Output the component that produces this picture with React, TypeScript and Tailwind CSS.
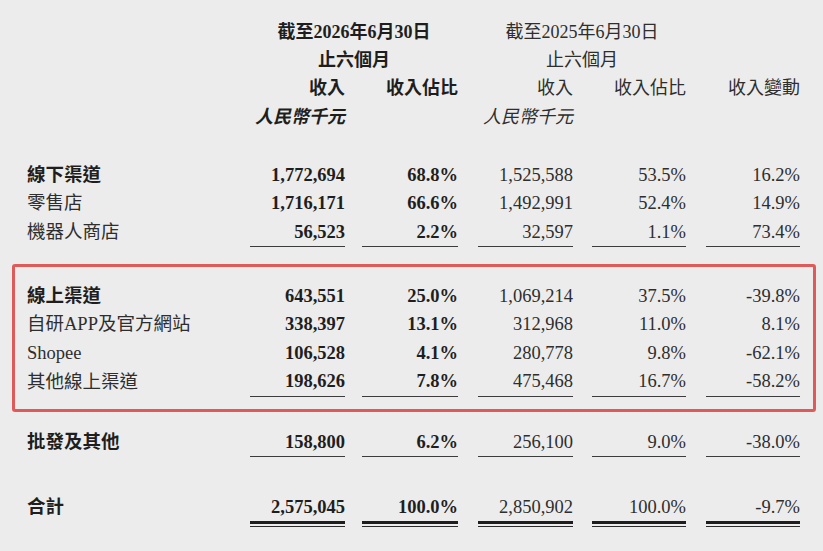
import React from "react";

const FONT = "font-['Liberation_Serif','Noto_Sans_CJK_TC',serif]";
const PADS = ["", "pl-[17px]", "pl-[20px]", "pl-[19px]", "pl-[20px]"];

type Line = "none" | "single" | "double";

function Row({
  label,
  values,
  boldLabel = false,
  line = "none",
  h = "h-[28px]",
}: {
  label: string;
  values: string[];
  boldLabel?: boolean;
  line?: Line;
  h?: string;
}) {
  return (
    <div className="grid grid-cols-[223px_95px_113px_115px_113px_114px]">
      <div
        className={`${h} flex items-center ${line === "double" ? "pb-[3px]" : ""} ${
          boldLabel ? "font-bold text-[#1e1e1e]" : "text-[#2e2e2e]"
        }`}
      >
        {label}
      </div>
      {values.map((v, i) => (
        <div key={i} className={PADS[i]}>
          <div
            className={`${h} flex items-center justify-end ${
              i < 2 ? "font-bold text-[#1e1e1e]" : "text-[#2e2e2e]"
            } ${line === "single" ? "border-b border-[#3c3c3c]" : ""} ${
              line === "double" ? "border-b-[3px] border-[#1e1e1e]" : ""
            }`}
          >
            {v}
          </div>
          {line === "double" && <div className="mt-[2px] h-px bg-[#2a2a2a]" />}
        </div>
      ))}
    </div>
  );
}

export default function App() {
  return (
    <div
      className={`w-[823px] h-[551px] overflow-hidden bg-[#ececec] ${FONT} text-[18.5px] leading-none pt-[18px] px-[27px]`}
    >
      {/* Header */}
      <div className="text-[18px]">
        <div className="grid grid-cols-[223px_95px_113px_115px_113px_114px] h-[28px] items-center">
          <div />
          <div className="col-span-2 text-center font-bold text-[#1e1e1e]">截至2026年6月30日</div>
          <div className="col-span-2 pl-[20px] text-center text-[#2e2e2e]">截至2025年6月30日</div>
          <div />
        </div>
        <div className="grid grid-cols-[223px_95px_113px_115px_113px_114px] h-[27px] items-center">
          <div />
          <div className="col-span-2 text-center font-bold text-[#1e1e1e]">止六個月</div>
          <div className="col-span-2 pl-[20px] text-center text-[#2e2e2e]">止六個月</div>
          <div />
        </div>
        <div className="grid grid-cols-[223px_95px_113px_115px_113px_114px] h-[29px] items-center">
          <div />
          <div className="text-right font-bold text-[#1e1e1e]">收入</div>
          <div className="pl-[17px] text-right font-bold text-[#1e1e1e]">收入佔比</div>
          <div className="pl-[20px] text-right text-[#2e2e2e]">收入</div>
          <div className="pl-[19px] text-right text-[#2e2e2e]">收入佔比</div>
          <div className="pl-[20px] text-right text-[#2e2e2e]">收入變動</div>
        </div>
        <div className="grid grid-cols-[223px_95px_113px_115px_113px_114px] h-[29px] items-center">
          <div />
          <div className="text-right italic font-bold text-[#1e1e1e]">人民幣千元</div>
          <div />
          <div className="pl-[20px] text-right italic text-[#2e2e2e]">人民幣千元</div>
          <div />
          <div />
        </div>
      </div>

      {/* Offline */}
      <div className="mt-[30px]">
        <Row label="線下渠道" boldLabel values={["1,772,694", "68.8%", "1,525,588", "53.5%", "16.2%"]} />
        <Row label="零售店" h="h-[29px]" values={["1,716,171", "66.6%", "1,492,991", "52.4%", "14.9%"]} />
        <Row label="機器人商店" h="h-[29px]" line="single" values={["56,523", "2.2%", "32,597", "1.1%", "73.4%"]} />
      </div>

      {/* Online (highlighted) */}
      <div className="mt-[17px] ml-[-15px] mr-[-20px] pl-[12px] pr-[17px] pt-[15px] pb-[12px] border-[3px] border-[#e05a5a] rounded-[3px]">
        <Row label="線上渠道" boldLabel values={["643,551", "25.0%", "1,069,214", "37.5%", "-39.8%"]} />
        <Row label="自研APP及官方網站" h="h-[29px]" values={["338,397", "13.1%", "312,968", "11.0%", "8.1%"]} />
        <Row label="Shopee" values={["106,528", "4.1%", "280,778", "9.8%", "-62.1%"]} />
        <Row label="其他線上渠道" h="h-[30px]" line="single" values={["198,626", "7.8%", "475,468", "16.7%", "-58.2%"]} />
      </div>

      {/* Wholesale */}
      <div className="mt-[16px]">
        <Row label="批發及其他" boldLabel h="h-[29px]" line="single" values={["158,800", "6.2%", "256,100", "9.0%", "-38.0%"]} />
      </div>

      {/* Total */}
      <div className="mt-[36px]">
        <Row label="合計" boldLabel h="h-[31px]" line="double" values={["2,575,045", "100.0%", "2,850,902", "100.0%", "-9.7%"]} />
      </div>
    </div>
  );
}
